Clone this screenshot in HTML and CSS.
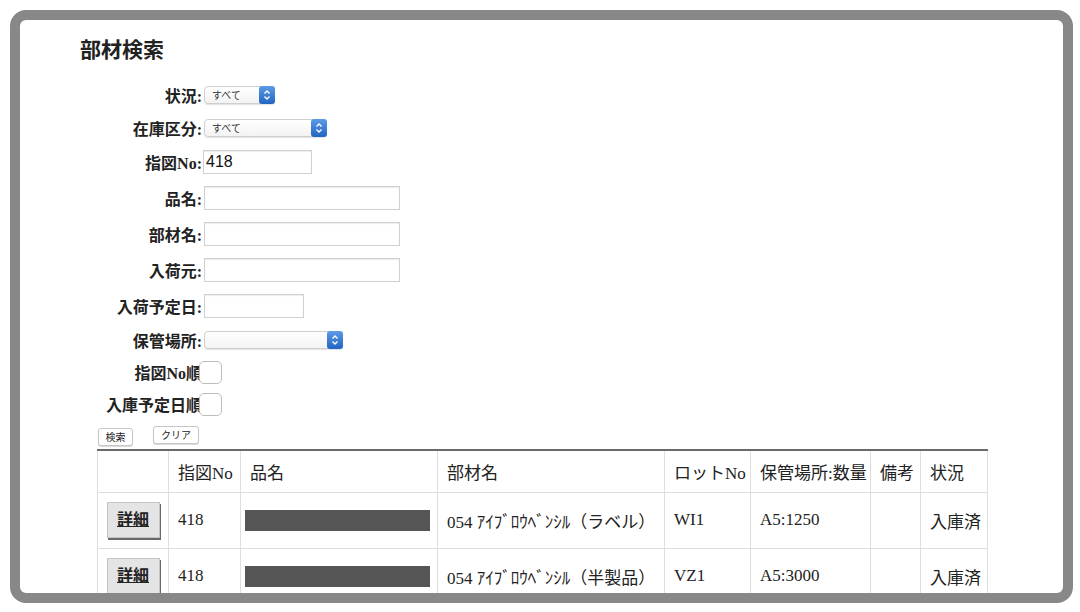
FILE: index.html
```html
<!DOCTYPE html>
<html lang="ja">
<head>
    <meta charset="UTF-8">
    <title>部材検索</title>
    <link rel="stylesheet" href="styles.css">
</head>
<body>
    <div class="frame">
        <h1 class="title">部材検索</h1>

        <form class="search">
            <div class="field row-select">
                <label>状況:</label>
                <div class="select" style="width: 71px">
                    <span class="select-text">すべて</span>
                    <span class="stepper"><svg width="10" height="12" viewBox="0 0 10 12"><path d="M2.5 4.5 L5 2 L7.5 4.5 M2.5 7.5 L5 10 L7.5 7.5" fill="none" stroke="#fff" stroke-width="1.4"/></svg></span>
                </div>
            </div>
            <div class="field row-select">
                <label>在庫区分:</label>
                <div class="select" style="width: 123px">
                    <span class="select-text">すべて</span>
                    <span class="stepper"><svg width="10" height="12" viewBox="0 0 10 12"><path d="M2.5 4.5 L5 2 L7.5 4.5 M2.5 7.5 L5 10 L7.5 7.5" fill="none" stroke="#fff" stroke-width="1.4"/></svg></span>
                </div>
            </div>
            <div class="field row-text">
                <label>指図No:</label>
                <input type="text" class="text-input no-input" value="418">
            </div>
            <div class="field row-text">
                <label>品名:</label>
                <input type="text" class="text-input wide">
            </div>
            <div class="field row-text">
                <label>部材名:</label>
                <input type="text" class="text-input wide">
            </div>
            <div class="field row-text">
                <label>入荷元:</label>
                <input type="text" class="text-input wide">
            </div>
            <div class="field row-date">
                <label>入荷予定日:</label>
                <input type="text" class="text-input short">
            </div>
            <div class="field row-select">
                <label>保管場所:</label>
                <div class="select" style="width: 139px">
                    <span class="select-text"></span>
                    <span class="stepper"><svg width="10" height="12" viewBox="0 0 10 12"><path d="M2.5 4.5 L5 2 L7.5 4.5 M2.5 7.5 L5 10 L7.5 7.5" fill="none" stroke="#fff" stroke-width="1.4"/></svg></span>
                </div>
            </div>
            <div class="field row-check">
                <label>指図No順</label>
                <input type="checkbox" class="check">
            </div>
            <div class="field row-check">
                <label>入庫予定日順</label>
                <input type="checkbox" class="check">
            </div>
            <div class="buttons">
                <button type="button" class="btn btn-search">検索</button>
                <button type="button" class="btn btn-clear">クリア</button>
            </div>
        </form>

        <table class="results">
            <colgroup>
                <col style="width: 71px">
                <col style="width: 72px">
                <col style="width: 197px">
                <col style="width: 227px">
                <col style="width: 86px">
                <col style="width: 120px">
                <col style="width: 50px">
                <col style="width: 67px">
            </colgroup>
            <tr class="head">
                <th></th>
                <th>指図No</th>
                <th>品名</th>
                <th>部材名</th>
                <th>ロットNo</th>
                <th>保管場所:数量</th>
                <th>備考</th>
                <th>状況</th>
            </tr>
            <tr>
                <td class="detail-cell"><a class="detail-btn">詳細</a></td>
                <td>418</td>
                <td class="name-cell"><span class="redact"></span></td>
                <td>054 ｱｲﾌﾞﾛｳﾍﾞﾝｼﾙ（ラベル）</td>
                <td>WI1</td>
                <td>A5:1250</td>
                <td></td>
                <td class="status">入庫済</td>
            </tr>
            <tr>
                <td class="detail-cell"><a class="detail-btn">詳細</a></td>
                <td>418</td>
                <td class="name-cell"><span class="redact"></span></td>
                <td>054 ｱｲﾌﾞﾛｳﾍﾞﾝｼﾙ（半製品）</td>
                <td>VZ1</td>
                <td>A5:3000</td>
                <td></td>
                <td class="status">入庫済</td>
            </tr>
        </table>
    </div>
</body>
</html>
```

FILE: styles.css
```css
body {
    margin: 0;
    background: #fff;
    font-family: 'Liberation Serif', 'Noto Sans CJK JP', serif;
    color: #222;
}

.frame {
    box-sizing: border-box;
    margin: 10px 0 0 10px;
    width: 1063px;
    height: 593px;
    border: 10px solid #888;
    border-radius: 16px;
    background: #fff;
    overflow: hidden;
}

.title {
    margin: 0;
    padding: 15px 0 0 60px;
    font-size: 21px;
    line-height: 30px;
    font-weight: bold;
}

.search {
    margin: 13px 0 0 77px;
}

.field {
    display: flex;
    align-items: center;
}

.row-select { height: 33px; }
.row-text { height: 36px; }
.row-date { height: 35px; }
.row-check { height: 32px; }

.field label {
    width: 105px;
    text-align: right;
    font-size: 16px;
    font-weight: bold;
    white-space: nowrap;
}

.select {
    box-sizing: border-box;
    display: flex;
    align-items: center;
    height: 18px;
    margin-left: 2px;
    border: 1px solid #cfcfcf;
    border-radius: 4px;
    background: linear-gradient(#fff, #f3f3f3);
    box-shadow: 0 1px 1px rgba(0, 0, 0, 0.12);
}

.select-text {
    flex: 1;
    padding-left: 7px;
    font-family: 'Noto Sans CJK JP', sans-serif;
    font-size: 10px;
    color: #333;
}

.stepper {
    display: flex;
    align-items: center;
    justify-content: center;
    width: 16px;
    height: 18px;
    margin-right: -1px;
    border-radius: 3px;
    background: linear-gradient(#5b9be6, #2364c2);
}

.text-input {
    box-sizing: border-box;
    height: 24px;
    margin: 0 0 0 2px;
    padding: 0 2px;
    border: 1px solid #d0d0d0;
    box-shadow: inset 0 1px 1px rgba(0, 0, 0, 0.08);
    font-family: 'Liberation Sans', sans-serif;
    font-size: 16px;
    color: #111;
}

.no-input {
    width: 109px;
    margin-left: 1px;
}

.wide { width: 196px; }
.short { width: 100px; }

.check {
    appearance: none;
    box-sizing: border-box;
    width: 23px;
    height: 23px;
    margin: 0 0 0 -3px;
    border: 1px solid #bdbdbd;
    border-radius: 5px;
    background: #fff;
}

.buttons {
    display: flex;
    align-items: flex-start;
    gap: 20px;
    height: 29px;
    padding-left: 1px;
    box-sizing: border-box;
    padding-top: 6px;
}

.btn {
    box-sizing: border-box;
    height: 18px;
    padding: 0;
    border: 1px solid #c6c6c6;
    border-radius: 3px;
    background: #fff;
    box-shadow: 0 1px 1px rgba(0, 0, 0, 0.15);
    font-family: 'Noto Sans CJK JP', sans-serif;
    font-size: 10px;
    line-height: 16px;
    color: #222;
}

.btn-search {
    width: 35px;
    margin-top: 2px;
}

.btn-clear {
    width: 46px;
}

.results {
    margin-left: 77px;
    width: 890px;
    table-layout: fixed;
    border-collapse: collapse;
    border-top: 2px solid #6a6a6a;
    border-left: 1px solid #9a9a9a;
    font-size: 17px;
}

.results th,
.results td {
    border: 1px solid #dedede;
    padding: 0 9px;
    text-align: left;
    white-space: nowrap;
}

.results th {
    font-weight: normal;
}

.results tr.head {
    height: 42px;
}

.results tr {
    height: 56px;
}

.results .detail-cell {
    padding: 0;
    text-align: center;
}

.detail-btn {
    display: inline-block;
    box-sizing: border-box;
    width: 53px;
    height: 36px;
    line-height: 34px;
    border: 1px solid #c4c4c4;
    background: #e4e4e4;
    box-shadow: 1px 2px 0 #6a6a6a;
    font-size: 16px;
    font-weight: bold;
    text-decoration: underline;
    color: #222;
}

.results .name-cell {
    padding: 0 0 0 4px;
}

.redact {
    display: block;
    width: 185px;
    height: 21px;
    background: #555;
}

.results .status {
    padding: 0 0 0 9px;
}
```
